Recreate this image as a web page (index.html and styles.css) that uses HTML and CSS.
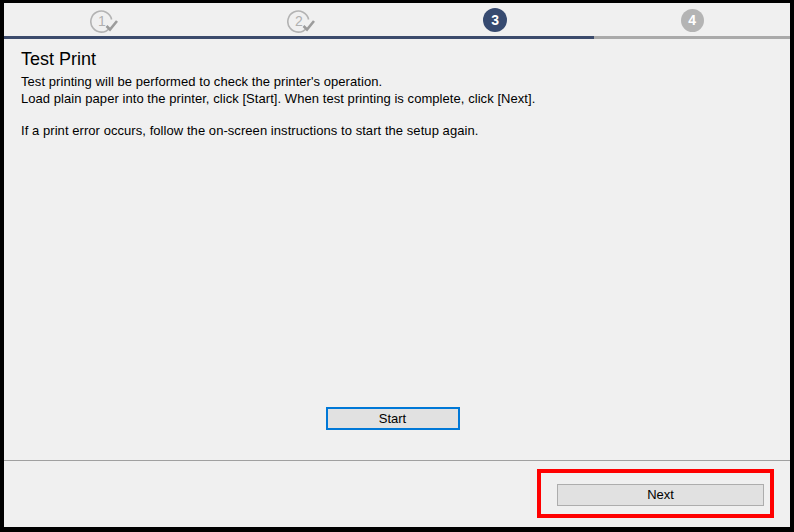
FILE: index.html
```html
<!DOCTYPE html>
<html lang="en">
<head>
  <meta charset="UTF-8">
  <title>Test Print</title>
  <link rel="stylesheet" href="styles.css">
</head>
<body>
  <div class="window">
    <!-- Step header -->
    <div class="steps">
      <div class="step">
        <svg class="done" width="32" height="26" viewBox="0 0 32 26">
          <path d="M19.5 20.2 A10.5 10.5 0 1 1 21.6 11.5" fill="none" stroke="#b3b3b3" stroke-width="1.6"/>
          <text x="12" y="18" text-anchor="middle" class="num-done">1</text>
          <path d="M16.5 18 L20 21.5 L27 13" fill="none" stroke="#9c9c9c" stroke-width="2.6"/>
        </svg>
      </div>
      <div class="step">
        <svg class="done" width="32" height="26" viewBox="0 0 32 26">
          <path d="M19.5 20.2 A10.5 10.5 0 1 1 21.6 11.5" fill="none" stroke="#b3b3b3" stroke-width="1.6"/>
          <text x="12" y="18" text-anchor="middle" class="num-done">2</text>
          <path d="M16.5 18 L20 21.5 L27 13" fill="none" stroke="#9c9c9c" stroke-width="2.6"/>
        </svg>
      </div>
      <div class="step">
        <span class="dot current">3</span>
      </div>
      <div class="step">
        <span class="dot todo">4</span>
      </div>
    </div>
    <div class="progress"><div class="progress-fill"></div></div>

    <!-- Main content -->
    <div class="main">
      <div class="content">
        <h2>Test Print</h2>
        <p>Test printing will be performed to check the printer's operation.<br>
        Load plain paper into the printer, click [Start]. When test printing is complete, click [Next].</p>
        <p class="gap">If a print error occurs, follow the on-screen instructions to start the setup again.</p>
      </div>
      <div class="start-row">
        <button class="btn start-btn">Start</button>
      </div>
    </div>

    <!-- Footer -->
    <div class="footer">
      <div class="highlight">
        <button class="btn next-btn">Next</button>
      </div>
    </div>
  </div>
</body>
</html>
```

FILE: styles.css
```css
:root {
  --bg: #f0f0f0;
  --navy: #364a70;
  --grey-step: #b4b4b4;
  --btn-bg: #e1e1e1;
}
body {
  margin: 0;
  padding: 0;
  background: #000;
  font-family: 'Liberation Sans', Arial, sans-serif;
  color: #000;
}
.window {
  margin: 3px 4px 5px 4px;
  height: 524px;
  background: var(--bg);
  display: flex;
  flex-direction: column;
}
/* Steps */
.steps {
  height: 33px;
  display: flex;
}
.step {
  flex: 1;
  display: flex;
  justify-content: center;
  align-items: center;
}
.done {
  margin-left: 8px;
  margin-top: 2px;
}
.num-done {
  font-family: 'Liberation Sans', Arial, sans-serif;
  font-size: 14px;
  fill: #b0b0b0;
}
.dot {
  width: 24px;
  height: 24px;
  border-radius: 50%;
  color: #fff;
  font-weight: bold;
  font-size: 14px;
  line-height: 24px;
  text-align: center;
  margin-top: 1px;
}
.dot.current {
  background: var(--navy);
}
.dot.todo {
  width: 23px;
  height: 23px;
  line-height: 23px;
  background: var(--grey-step);
  margin-left: 1px;
}
.progress {
  height: 3px;
  background: #aaaaaa;
}
.progress-fill {
  width: 75%;
  height: 100%;
  background: #3c4b6c;
}
/* Main */
.main {
  flex: 1;
  display: flex;
  flex-direction: column;
  justify-content: space-between;
}
.content {
  padding: 10px 17px 0 17px;
}
h2 {
  margin: 0 0 4px 0;
  font-size: 18px;
  font-weight: normal;
  line-height: 20px;
}
p {
  margin: 0;
  font-size: 13px;
  letter-spacing: 0.06px;
  line-height: 17px;
}
p.gap {
  margin-top: 15px;
}
.start-row {
  display: flex;
  justify-content: center;
  padding: 0 9px 30px 0;
}
.btn {
  font-family: 'Liberation Sans', Arial, sans-serif;
  font-size: 13px;
  background: var(--btn-bg);
  color: #000;
  padding: 0;
  cursor: pointer;
}
.start-btn {
  width: 134px;
  height: 23px;
  border: 2px solid #0078d7;
}
/* Footer */
.footer {
  border-top: 1px solid #a0a0a0;
  height: 67px;
  box-sizing: border-box;
  padding: 8px 16px 9px 0;
  display: flex;
  justify-content: flex-end;
}
.highlight {
  width: 237px;
  border: 4px solid #ff0000;
  box-sizing: border-box;
  padding: 11px 6px 0 16px;
}
.next-btn {
  width: 100%;
  height: 22px;
  line-height: 20px;
  border: 1px solid #adadad;
  display: block;
}
```
